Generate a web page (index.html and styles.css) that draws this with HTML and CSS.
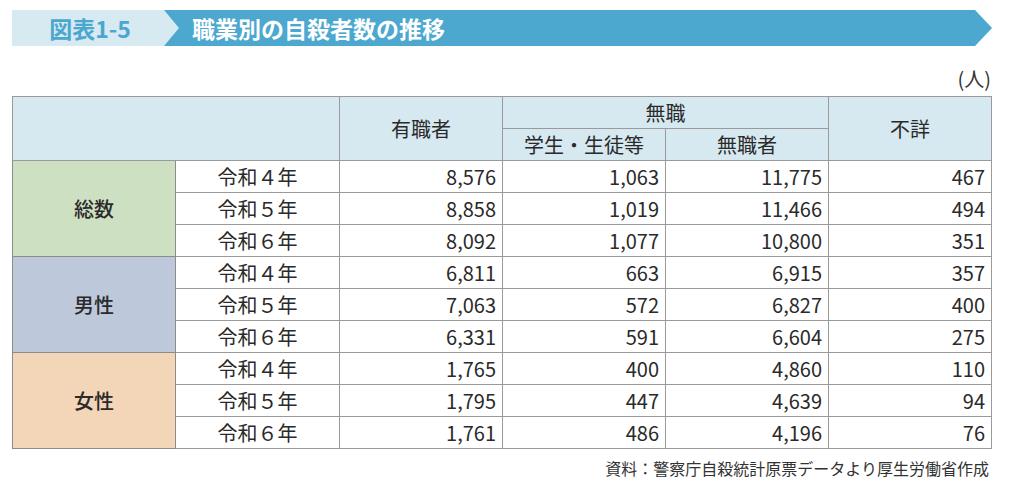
FILE: index.html
```html
<!DOCTYPE html>
<html lang="ja">
<head>
<meta charset="utf-8">
<title>図表1-5 職業別の自殺者数の推移</title>
<link rel="stylesheet" href="styles.css">
</head>
<body>
<div class="page">
  <div class="title-bar">
    <div class="title-label">図表1-5</div>
    <div class="title-main">職業別の自殺者数の推移</div>
  </div>
  <div class="unit">(人)</div>
  <table class="data">
    <colgroup>
      <col class="c1"><col class="c2"><col class="c3"><col class="c4"><col class="c5"><col class="c6">
    </colgroup>
    <thead>
      <tr>
        <th colspan="2" rowspan="2"></th>
        <th rowspan="2">有職者</th>
        <th colspan="2">無職</th>
        <th rowspan="2">不詳</th>
      </tr>
      <tr>
        <th>学生・生徒等</th>
        <th>無職者</th>
      </tr>
    </thead>
    <tbody>
      <tr><th rowspan="3" class="grp total">総数</th><td class="yr">令和４年</td><td>8,576</td><td>1,063</td><td>11,775</td><td>467</td></tr>
      <tr><td class="yr">令和５年</td><td>8,858</td><td>1,019</td><td>11,466</td><td>494</td></tr>
      <tr><td class="yr">令和６年</td><td>8,092</td><td>1,077</td><td>10,800</td><td>351</td></tr>
      <tr><th rowspan="3" class="grp male">男性</th><td class="yr">令和４年</td><td>6,811</td><td>663</td><td>6,915</td><td>357</td></tr>
      <tr><td class="yr">令和５年</td><td>7,063</td><td>572</td><td>6,827</td><td>400</td></tr>
      <tr><td class="yr">令和６年</td><td>6,331</td><td>591</td><td>6,604</td><td>275</td></tr>
      <tr><th rowspan="3" class="grp female">女性</th><td class="yr">令和４年</td><td>1,765</td><td>400</td><td>4,860</td><td>110</td></tr>
      <tr><td class="yr">令和５年</td><td>1,795</td><td>447</td><td>4,639</td><td>94</td></tr>
      <tr><td class="yr">令和６年</td><td>1,761</td><td>486</td><td>4,196</td><td>76</td></tr>
    </tbody>
  </table>
  <div class="source">資料：警察庁自殺統計原票データより厚生労働省作成</div>
</div>
</body>
</html>
```

FILE: styles.css
```css
html, body {
  margin: 0;
  padding: 0;
  background: #ffffff;
}
body {
  font-family: "Noto Sans CJK JP", "Noto Sans", sans-serif;
  color: #2a2a2a;
}
.page {
  padding: 10px 0 0 12px;
  width: 980px;
}
.title-bar {
  display: flex;
  height: 36px;
  width: 980px;
  background: #d7e9f1;
  clip-path: polygon(0 0, 963px 0, 980px 50%, 963px 100%, 0 100%);
}
.title-label {
  width: 152px;
  flex: none;
  display: flex;
  align-items: center;
  justify-content: center;
  padding-left: 4px;
  box-sizing: border-box;
  font-size: 23px;
  font-weight: 700;
  color: #4aa7cf;
}
.title-main {
  flex: 1;
  background: #4ca8cf;
  clip-path: polygon(0 0, 100% 0, 100% 100%, 0 100%, 15px 50%);
  display: flex;
  align-items: center;
  padding-left: 28px;
  font-size: 23px;
  font-weight: 700;
  color: #ffffff;
}
.unit {
  text-align: right;
  font-size: 20px;
  line-height: 26px;
  height: 26px;
  margin-top: 20px;
  padding-right: 1px;
  margin-bottom: 4px;
  color: #333;
}
table.data {
  border-collapse: collapse;
  table-layout: fixed;
  width: 980px;
  font-size: 20px;
}
col.c1 { width: 163px; }
col.c2 { width: 164px; }
col.c3 { width: 163px; }
col.c4 { width: 163px; }
col.c5 { width: 163px; }
col.c6 { width: 163px; }
table.data tr {
  height: 32px;
}
table.data th,
table.data td {
  border: 1px solid #9a9a9a;
  padding: 0;
  line-height: 1;
  vertical-align: middle;
}
table.data thead th {
  background: #d6e8f0;
  font-weight: 400;
  text-align: center;
  color: #2a2a2a;
}
table.data td {
  text-align: right;
  padding-right: 6px;
  color: #2a2a2a;
}
table.data td.yr {
  text-align: center;
  padding-right: 0;
}
table.data th.grp {
  font-weight: 500;
  text-align: center;
  border-color: #8c8c8c;
}
th.total { background: #cde0c2; }
th.male { background: #bdc8db; }
th.female { background: #f3d5b7; }
.source {
  text-align: right;
  font-size: 16px;
  line-height: 20px;
  margin-top: 9px;
  padding-right: 3px;
  color: #333;
}
```
